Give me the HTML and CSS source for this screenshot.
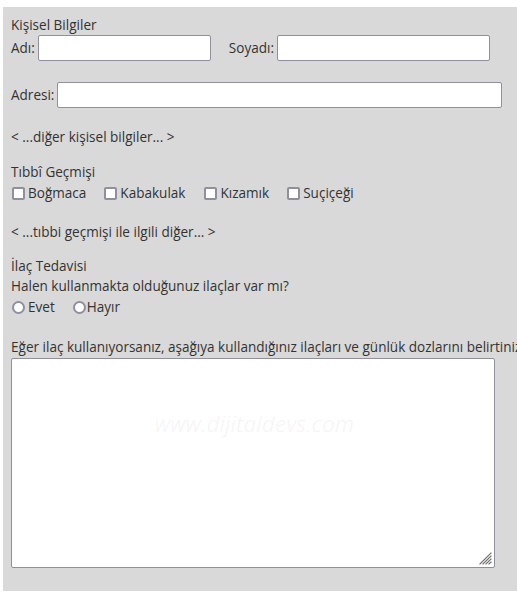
FILE: index.html
```html
<!DOCTYPE html>
<html lang="tr">
<head>
<meta charset="utf-8">
<title>Hasta Formu</title>
<link rel="stylesheet" href="styles.css">
</head>
<body>
<form class="form">
  <div class="line">Kişisel Bilgiler</div>
  <div class="row row-name">
    <label class="field">Adı: <input type="text" class="inp inp-ad"></label>
    <label class="field field-soyad">Soyadı: <input type="text" class="inp inp-soyad"></label>
  </div>
  <div class="row row-adres">
    <label class="field">Adresi: <input type="text" class="inp inp-adres"></label>
  </div>
  <div class="line note">&lt; ...diğer kişisel bilgiler... &gt;</div>

  <div class="line section">Tıbbî Geçmişi</div>
  <div class="line checks">
    <label class="opt opt-1"><input type="checkbox" class="box">Boğmaca</label>
    <label class="opt opt-2"><input type="checkbox" class="box">Kabakulak</label>
    <label class="opt opt-3"><input type="checkbox" class="box">Kızamık</label>
    <label class="opt"><input type="checkbox" class="box">Suçiçeği</label>
  </div>
  <div class="line note">&lt; ...tıbbi geçmişi ile ilgili diğer... &gt;</div>

  <div class="line section-2">İlaç Tedavisi</div>
  <div class="line">Halen kullanmakta olduğunuz ilaçlar var mı?</div>
  <div class="line radios">
    <label class="opt opt-evet"><input type="radio" name="ilac" class="dot">Evet</label>
    <label class="opt opt-hayir"><input type="radio" name="ilac" class="dot">Hayır</label>
  </div>
  <div class="line ask">Eğer ilaç kullanıyorsanız, aşağıya kullandığınız ilaçları ve günlük dozlarını belirtiniz</div>
  <div class="area-wrap">
    <textarea class="area"></textarea>
    <span class="mark">www.dijitaldevs.com</span>
    <svg class="grip" width="13" height="13" viewBox="0 0 13 13" aria-hidden="true">
      <g stroke="#6e6e6e" stroke-width="1.2" stroke-linecap="square">
        <line x1="1" y1="12" x2="12" y2="1"/>
        <line x1="4" y1="12" x2="12" y2="4"/>
        <line x1="7" y1="12" x2="12" y2="7"/>
        <line x1="10" y1="12" x2="12" y2="10"/>
      </g>
    </svg>
  </div>
</form>
</body>
</html>
```
FILE: styles.css
```css
html, body {
  overflow: hidden;
}

body {
  margin: 7px 0 0 3px;
  background: #ffffff;
}

.form {
  background: #d9d9d9;
  padding: 8px 0 23px 8px;
  font-family: "Open Sans", "DejaVu Sans", sans-serif;
  font-size: 13.55px;
  color: #333333;
  line-height: 20px;
  white-space: nowrap;
}

.line {
  height: 20px;
}

.row {
  display: flex;
  align-items: center;
  height: 26px;
}

.row-adres {
  margin-top: 21px;
}

.field {
  display: flex;
  align-items: center;
  gap: 3px;
}

.field-soyad {
  margin-left: 18px;
}

.inp {
  box-sizing: border-box;
  height: 26px;
  margin: 0;
  border: 1px solid #8f8f9d;
  border-radius: 2px;
  background: #ffffff;
  font: inherit;
  padding: 0 4px;
}

.inp-ad { width: 173px; }
.inp-soyad { width: 213px; }
.inp-adres { width: 445px; }

.note {
  margin-top: 19px;
}

.section {
  margin-top: 15px;
}

.section-2 {
  margin-top: 14px;
}

.checks,
.radios {
  display: flex;
  align-items: center;
  padding-top: 1px;
}

.opt {
  display: flex;
  align-items: center;
}

.opt-1 { margin-right: 17px; }
.opt-2 { margin-right: 18px; }
.opt-3 { margin-right: 17px; }

.box,
.dot {
  appearance: none;
  -webkit-appearance: none;
  box-sizing: border-box;
  width: 13px;
  height: 13px;
  margin: 0 3px 0 1px;
  border: 2px solid #8f8f9d;
  background: #ffffff;
}

.box {
  border-radius: 2px;
}

.dot {
  border-radius: 50%;
}

.opt-evet {
  margin-right: 17px;
}

.opt-hayir .dot {
  margin-right: 1px;
}

.ask {
  margin-top: 20px;
}

.area-wrap {
  position: relative;
  width: 484px;
  margin-top: 1px;
}

.area {
  display: block;
  box-sizing: border-box;
  width: 484px;
  height: 210px;
  margin: 0;
  border: 1px solid #8f8f9d;
  border-radius: 2px;
  background: #ffffff;
  resize: none;
  font: inherit;
}

.mark {
  position: absolute;
  left: 144px;
  top: 55px;
  font-family: "Open Sans", sans-serif;
  font-style: italic;
  font-weight: 300;
  font-size: 22px;
  letter-spacing: 0.5px;
  color: #f4f4f4;
  pointer-events: none;
}

.grip {
  position: absolute;
  right: 3px;
  bottom: 3px;
}
```
